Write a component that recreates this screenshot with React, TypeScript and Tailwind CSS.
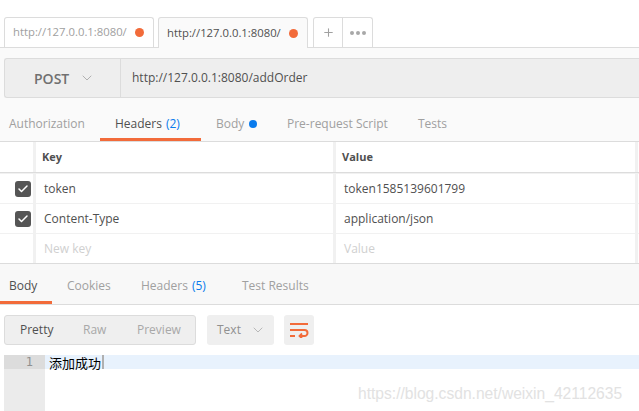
import { Check, ChevronDown, Plus } from 'lucide-react';

const FONT = { fontFamily: '"Open Sans", "Noto Sans CJK SC", sans-serif' };

function RequestTab({ active }: { active?: boolean }) {
  return (
    <div
      className={`flex h-[30px] w-[150px] items-center justify-between rounded-t-[3px] border border-b-0 border-[#dcdcdc] pl-[8px] pr-[9px] text-[11.3px] ${
        active ? 'relative -mb-px h-[31px] bg-[#fafafa] text-[#505050]' : 'bg-white text-[#a0a0a0]'
      }`}
    >
      <span>http://127.0.0.1:8080/</span>
      <span className="h-[9px] w-[9px] rounded-full bg-[#f26b3a]" />
    </div>
  );
}

function WrapIcon() {
  return (
    <svg width="20" height="16" viewBox="0 0 20 16" fill="none" stroke="#f26b3a" strokeWidth="2">
      <path d="M1 2h18" />
      <path d="M1 8h14.5a3 3 0 0 1 0 6H11" />
      <path d="M13 11.5l-2.5 2.5 2.5 2.5" strokeWidth="1.8" />
      <path d="M1 14h5" />
    </svg>
  );
}

const headers = [
  { key: 'token', value: 'token1585139601799' },
  { key: 'Content-Type', value: 'application/json' },
];

export default function App() {
  return (
    <div className="relative h-[411px] w-[639px] overflow-hidden bg-white" style={FONT}>
      {/* tab strip */}
      <div className="flex h-[47px] items-end gap-[4px] pl-[4px]">
        <RequestTab />
        <RequestTab active />
        <div className="ml-[1px] flex h-[30px] rounded-t-[3px] border border-b-0 border-[#dcdcdc] bg-white text-[#a0a0a0]">
          <div className="flex w-[29px] items-center justify-center border-r border-[#dcdcdc]">
            <Plus className="h-[13px] w-[13px]" strokeWidth={2} />
          </div>
          <div className="flex w-[29px] items-center justify-center gap-[2px]">
            <span className="h-[4px] w-[4px] rounded-full bg-[#a8a8a8]" />
            <span className="h-[4px] w-[4px] rounded-full bg-[#a8a8a8]" />
            <span className="h-[4px] w-[4px] rounded-full bg-[#a8a8a8]" />
          </div>
        </div>
      </div>

      {/* request panel */}
      <div className="border-t border-[#dcdcdc] bg-[#fafafa]">
        <div className="pl-[4px] pt-[10px]">
          <div className="flex h-[40px] rounded-l-[3px] border border-r-0 border-[#dcdcdc] bg-[#eeeeee]">
            <div className="flex w-[116px] items-center border-r border-[#dcdcdc] pl-[29px] text-[14px] font-semibold text-[#707070]">
              POST
              <ChevronDown className="ml-[10px] h-[16px] w-[16px] text-[#b0b0b0]" strokeWidth={1.5} />
            </div>
            <div className="flex items-center pl-[11px] text-[12px] text-[#505050]">http://127.0.0.1:8080/addOrder</div>
          </div>
        </div>

        <div className="flex h-[43px] items-stretch pl-[9px] pt-[9px] text-[12px] text-[#a0a0a0]">
          <div className="flex w-[91px] items-center">Authorization</div>
          <div className="relative flex w-[101px] items-center pl-[15px] text-[#505050]">
            Headers<span className="ml-[4px] text-[#097bed]">(2)</span>
            <span className="absolute bottom-0 left-0 right-0 h-[3px] bg-[#f26b3a]" />
          </div>
          <div className="ml-[15px] flex w-[71px] items-center">
            Body<span className="ml-[5px] h-[8px] w-[8px] rounded-full bg-[#097bed]" />
          </div>
          <div className="flex w-[131px] items-center">Pre-request Script</div>
          <div className="flex items-center">Tests</div>
        </div>
      </div>

      {/* headers table */}
      <div className="grid grid-cols-[33px_297px_299px_10px] gap-x-[3px] border-t border-[#dcdcdc] bg-[#f1f1f1] text-[12px]">
        <div className="h-[30px] bg-white" />
        <div className="flex h-[30px] items-center bg-white pl-[6px] text-[11px] font-bold text-[#505050]">Key</div>
        <div className="flex h-[30px] items-center bg-white pl-[6px] text-[11px] font-bold text-[#505050]">Value</div>
        <div className="h-[30px] bg-white" />
        <div className="col-span-4 h-[1px] bg-[#dcdcdc]" />
        {headers.map((h) => (
          <div key={h.key} className="contents">
            <div className="mt-[1px] flex h-[29px] items-center justify-end bg-white pr-[2px]">
              <span className="flex h-[16px] w-[16px] items-center justify-center rounded-[3px] bg-[#555555]">
                <Check className="h-[12px] w-[12px] text-white" strokeWidth={3} />
              </span>
            </div>
            <div className="mt-[1px] flex h-[29px] items-center bg-white pl-[8px] text-[#505050]">{h.key}</div>
            <div className="mt-[1px] flex h-[29px] items-center bg-white pl-[8px] text-[#505050]">{h.value}</div>
            <div className="mt-[1px] h-[29px] bg-white" />
          </div>
        ))}
        <div className="mt-[1px] h-[29px] bg-white" />
        <div className="mt-[1px] flex h-[29px] items-center bg-white pl-[8px] text-[#d0d0d0]">New key</div>
        <div className="mt-[1px] flex h-[29px] items-center bg-white pl-[8px] text-[#d0d0d0]">Value</div>
        <div className="mt-[1px] h-[29px] bg-white" />
      </div>

      {/* response tabs */}
      <div className="flex h-[42px] border-y border-[#dcdcdc] bg-[#f8f8f8] pt-[3px] text-[12px] text-[#a0a0a0]">
        <div className="relative flex w-[52px] items-center pl-[9px] text-[#505050]">
          Body
          <span className="absolute bottom-0 left-0 right-0 h-[3px] bg-[#f26b3a]" />
        </div>
        <div className="ml-[15px] flex w-[74px] items-center">Cookies</div>
        <div className="flex w-[101px] items-center">
          Headers<span className="ml-[4px] text-[#097bed]">(5)</span>
        </div>
        <div className="flex items-center">Test Results</div>
      </div>

      {/* response toolbar */}
      <div className="flex items-center gap-[10px] pl-[4px] pt-[10px] text-[12px]">
        <div className="flex h-[30px] w-[192px] items-center rounded-[3px] border border-[#dcdcdc] bg-[#efefef] text-[#a8a8a8]">
          <span className="w-[78px] shrink-0 pl-[15px] text-[#505050]">Pretty</span>
          <span className="w-[54px] shrink-0">Raw</span>
          <span>Preview</span>
        </div>
        <div className="ml-[1px] flex h-[30px] w-[67px] items-center rounded-[3px] bg-[#efefef] pl-[10px] text-[#909090]">
          Text
          <ChevronDown className="ml-[9px] h-[16px] w-[16px] text-[#b8b8b8]" strokeWidth={1.5} />
        </div>
        <div className="flex h-[30px] w-[30px] items-center justify-center rounded-[3px] bg-[#efefef]">
          <WrapIcon />
        </div>
      </div>

      {/* editor */}
      <div className="mt-[10px] flex pl-[4px]">
        <div className="flex h-[60px] w-[41px] flex-col bg-[#ebebeb]">
          <div className="flex h-[14px] items-center justify-end bg-[#dcdcdc] pr-[12px] text-[12px] text-[#909090]" style={{ fontFamily: '"DejaVu Sans Mono", monospace' }}>
            1
          </div>
        </div>
        <div className="flex-1">
          <div
            className="flex h-[14px] items-center bg-[#e8f2fd] pl-[4px] text-[13px] leading-none text-black"
            style={{ fontFamily: '"Noto Sans CJK SC", sans-serif' }}
          >
            添加成功
            <span className="ml-[1px] h-[14px] w-[2px] bg-[#b0b0b0]" />
          </div>
        </div>
      </div>

      {/* watermark */}
      <div
        className="absolute left-[358px] top-[382px] text-[15.6px] text-[#e2e2e2]"
        style={{ fontFamily: '"Liberation Sans", Arial, sans-serif' }}
      >
        https://blog.csdn.net/weixin_42112635
      </div>
    </div>
  );
}
